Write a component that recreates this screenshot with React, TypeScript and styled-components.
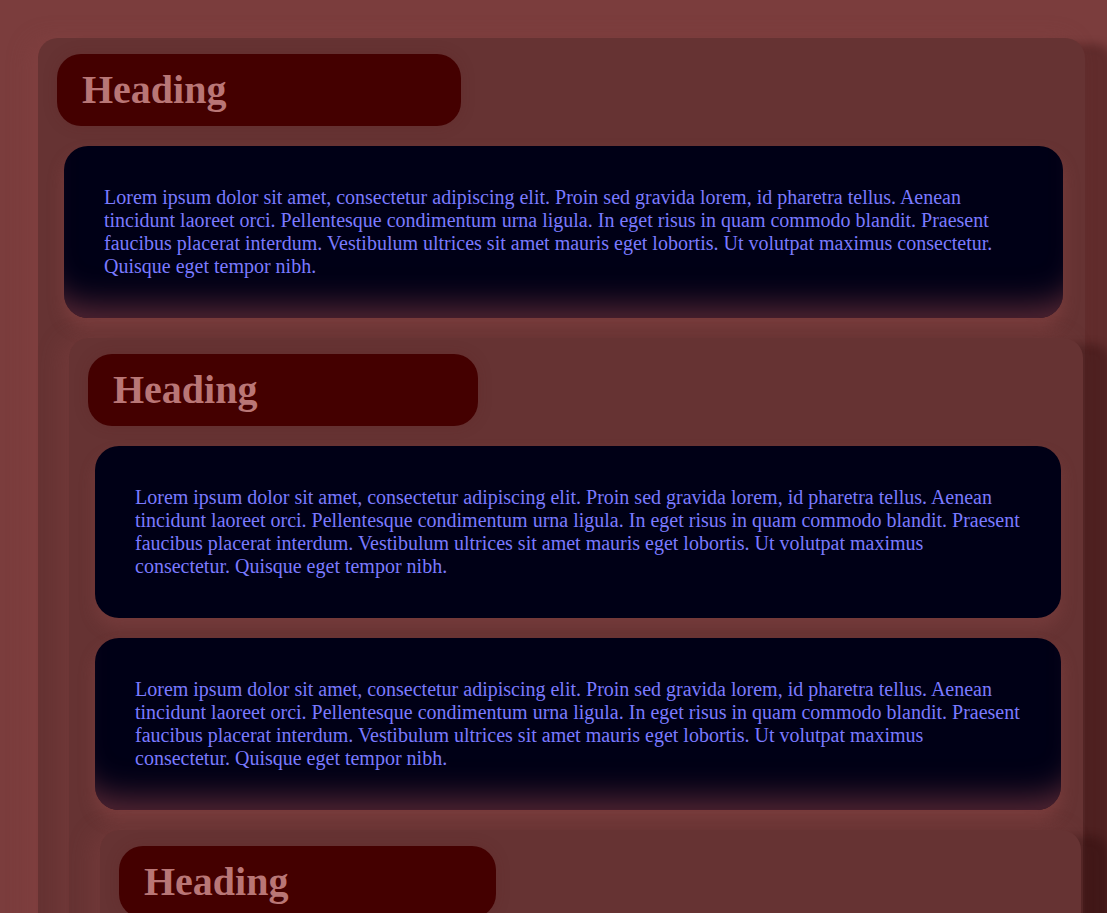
import React from "react";
import styled, { createGlobalStyle } from "styled-components";

const Global = createGlobalStyle`
  html { background: #7b3d3d; }
  body {
    margin: 0;
    min-height: 100vh;
    background: #7b3d3d;
    font-family: "Liberation Serif", "Times New Roman", serif;
    overflow: hidden;
  }
`;

const Page = styled.div`
  padding: 38px 22px 0 38px;
`;

const Section = styled.section<{ $nested?: boolean }>`
  background: #663333;
  border-radius: 20px;
  padding: 16px 19px 19px 19px;
  display: flex;
  flex-direction: column;
  gap: 20px;
  box-shadow: 30px 4px 8px -2px rgba(35, 8, 8, 0.3),
    -10px 0 22px rgba(140, 70, 70, 0.3);
  ${(p) => (p.$nested ? "margin: 0 -17px 0 12px;" : "")}
`;

const Heading = styled.h1`
  width: 40%;
  box-sizing: border-box;
  margin: 0;
  padding: 13px 25px;
  background: #440000;
  border-radius: 24px;
  color: #b97676;
  font-size: 40px;
  line-height: 46px;
  font-weight: bold;
  box-shadow: 0 0 14px rgba(90, 30, 30, 0.25);
`;

const Para = styled.p`
  margin: 0 3px 0 7px;
  padding: 40px;
  background: #000016;
  border-radius: 24px;
  color: #7a7aff;
  font-size: 20px;
  line-height: 23px;
  box-shadow: 0 10px 16px rgba(150, 75, 75, 0.3);

  &:last-of-type {
    box-shadow: inset 0 -36px 32px -24px rgba(110, 50, 60, 0.8),
      0 10px 16px rgba(150, 75, 75, 0.4);
  }
`;

const lorem =
  "Lorem ipsum dolor sit amet, consectetur adipiscing elit. Proin sed gravida lorem, id pharetra tellus. Aenean tincidunt laoreet orci. Pellentesque condimentum urna ligula. In eget risus in quam commodo blandit. Praesent faucibus placerat interdum. Vestibulum ultrices sit amet mauris eget lobortis. Ut volutpat maximus consectetur. Quisque eget tempor nibh.";

export default function App() {
  return (
    <>
      <Global />
      <Page>
        <Section>
          <Heading>Heading</Heading>
          <Para>{lorem}</Para>
          <Section $nested>
            <Heading>Heading</Heading>
            <Para>{lorem}</Para>
            <Para>{lorem}</Para>
            <Section $nested>
              <Heading>Heading</Heading>
              <Para>{lorem}</Para>
            </Section>
          </Section>
        </Section>
      </Page>
    </>
  );
}
